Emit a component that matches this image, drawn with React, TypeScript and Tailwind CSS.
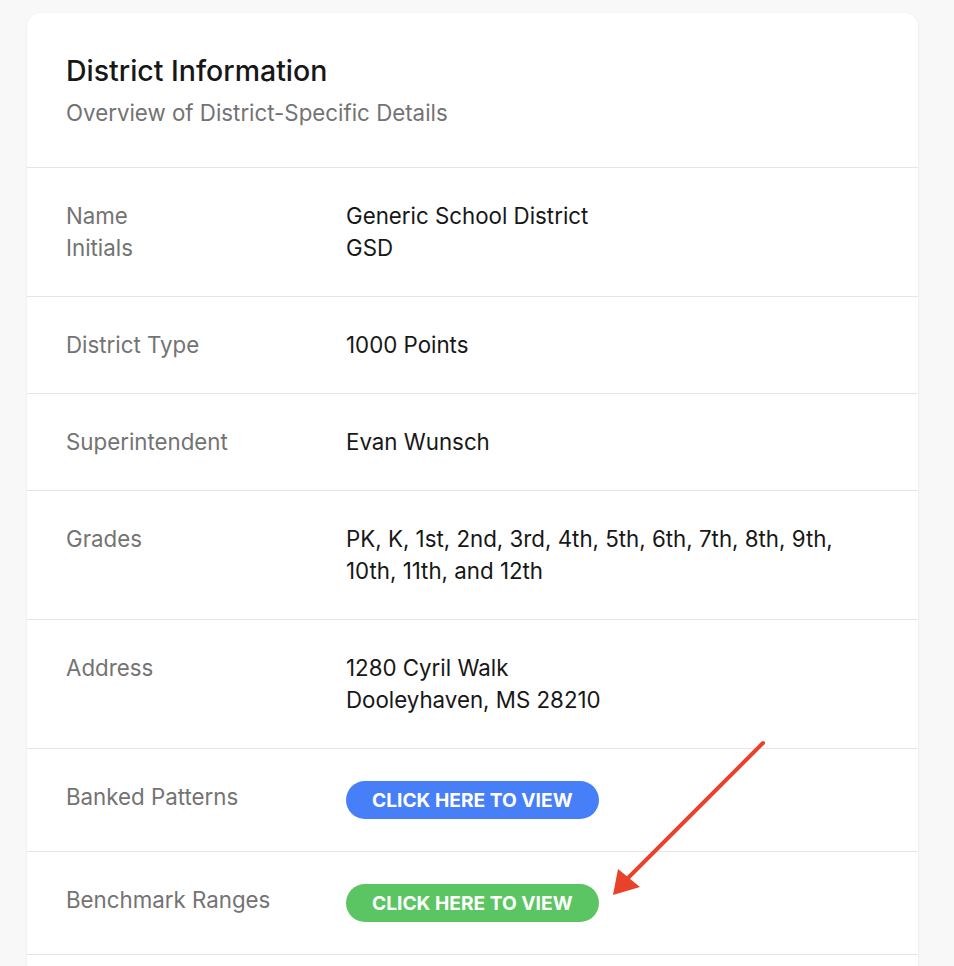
import type { ReactNode } from "react";

type Row = { label: ReactNode; value: ReactNode };

function ViewButton({ color }: { color: "blue" | "green" }) {
  return (
    <button
      type="button"
      className={
        color === "blue"
          ? "h-[38px] rounded-full bg-[#467ff7] px-[26px] text-[19.2px] leading-[38px] font-bold text-white"
          : "h-[38px] rounded-full bg-[#5bc563] px-[26px] text-[19.2px] leading-[38px] font-bold text-white"
      }
    >
      CLICK HERE TO VIEW
    </button>
  );
}

const rows: Row[] = [
  {
    label: (
      <>
        Name
        <br />
        Initials
      </>
    ),
    value: (
      <>
        Generic School District
        <br />
        GSD
      </>
    ),
  },
  { label: "District Type", value: "1000 Points" },
  { label: "Superintendent", value: "Evan Wunsch" },
  {
    label: "Grades",
    value: "PK, K, 1st, 2nd, 3rd, 4th, 5th, 6th, 7th, 8th, 9th, 10th, 11th, and 12th",
  },
  {
    label: "Address",
    value: (
      <>
        1280 Cyril Walk
        <br />
        Dooleyhaven, MS 28210
      </>
    ),
  },
  { label: "Banked Patterns", value: <ViewButton color="blue" /> },
  { label: "Benchmark Ranges", value: <ViewButton color="green" /> },
];

export default function App() {
  return (
    <div
      className="relative min-h-[966px] overflow-hidden bg-[#f8f8f8] pt-[13px]"
      style={{ fontFamily: "Inter, 'Noto Sans', sans-serif" }}
    >
      <div className="ml-[27px] w-[891px] rounded-[14px] bg-white shadow-[0_1px_3px_rgba(0,0,0,0.08)]">
        <div className="border-b border-[#e5e5e5] px-[39px] pt-10 pb-[38px]">
          <h2 className="text-[28.5px] leading-[36px] font-medium text-[#171717]">
            District Information
          </h2>
          <p className="mt-2 text-[22.3px] leading-[32px] text-[#737373]">
            Overview of District-Specific Details
          </p>
        </div>

        <dl>
          {rows.map((row, i) => (
            <div
              key={i}
              className="flex border-b border-[#e5e5e5] px-[39px] py-8 text-[22.3px] leading-[32px]"
            >
              <dt className="w-[280px] shrink-0 text-[#737373]">{row.label}</dt>
              <dd className="flex-1 text-[#171717]">{row.value}</dd>
            </div>
          ))}
          <div className="h-[80px]" />
        </dl>
      </div>

      {/* callout arrow pointing at the benchmark button */}
      <svg
        className="pointer-events-none absolute top-0 left-0"
        width="954"
        height="966"
        viewBox="0 0 954 966"
      >
        <line x1="763" y1="743" x2="628" y2="878" stroke="#e8432a" strokeWidth="4" strokeLinecap="round" />
        <polygon points="613,895 618,869 640,887" fill="#e8432a" />
      </svg>
    </div>
  );
}
